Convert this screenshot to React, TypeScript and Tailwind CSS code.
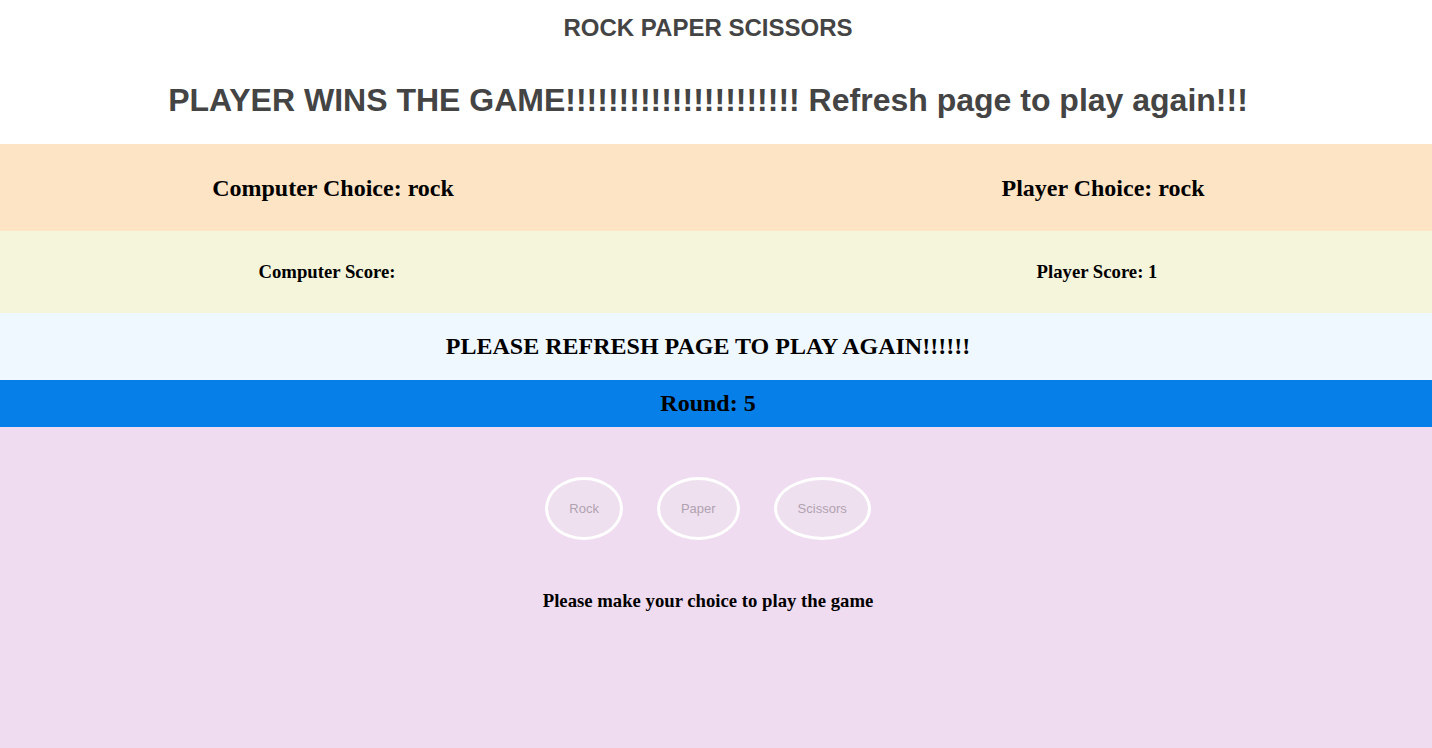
export default function App() {
  const serif = { fontFamily: '"Liberation Serif", "Times New Roman", serif' }
  return (
    <div className="min-h-[748px] flex flex-col bg-[#f0dcf0]" style={{ fontFamily: '"Liberation Sans", Arial, sans-serif' }}>
      <div className="bg-white pr-[16px]">
        <h1 className="h-[56px] flex items-center justify-center text-[24px] font-bold text-[#444]">ROCK PAPER SCISSORS</h1>
        <h2 className="h-[88px] flex items-center justify-center text-[32px] font-bold text-[#444] pb-[1px]">
          PLAYER WINS THE GAME!!!!!!!!!!!!!!!!!!!!!! Refresh page to play again!!!
        </h2>
      </div>

      <div className="h-[87px] bg-[#fde4c5] flex items-center justify-between pl-[131px] pr-[127px]" style={serif}>
        <div className="w-[404px] text-center text-[24px] font-bold text-black">Computer Choice: rock</div>
        <div className="w-[404px] text-center text-[24px] font-bold text-black">Player Choice: rock</div>
      </div>

      <div className="h-[82px] bg-[#f5f5dc] flex items-center justify-between pl-[131px] pr-[133px]" style={serif}>
        <div className="w-[392px] text-center text-[18.72px] font-bold text-black">Computer Score:</div>
        <div className="w-[404px] text-center text-[18.72px] font-bold text-black">Player Score: 1</div>
      </div>

      <div className="h-[67px] bg-[#f0f8ff] flex items-center justify-center pr-[16px] pb-[2px] text-[24px] font-bold text-black" style={serif}>
        PLEASE REFRESH PAGE TO PLAY AGAIN!!!!!!
      </div>

      <div className="h-[47px] bg-[#077fe8] flex items-center justify-center pr-[16px] pb-[1px] text-[24px] font-bold text-black" style={serif}>
        Round: 5
      </div>

      <div className="flex-1 flex flex-col items-center pt-[50px] pr-[16px]">
        <div className="flex gap-[34px]">
          {["Rock", "Paper", "Scissors"].map(label => (
            <button
              key={label}
              className="h-[63px] px-[21px] rounded-[50%] border-[3px] border-white bg-[#efe0ef] text-[13px] text-[#b0a2b0]"
              style={{ fontFamily: '"Liberation Sans", Arial, sans-serif' }}
            >
              {label}
            </button>
          ))}
        </div>
        <p className="mt-[47px] text-[18.72px] font-bold text-black" style={serif}>Please make your choice to play the game</p>
      </div>
    </div>
  )
}
